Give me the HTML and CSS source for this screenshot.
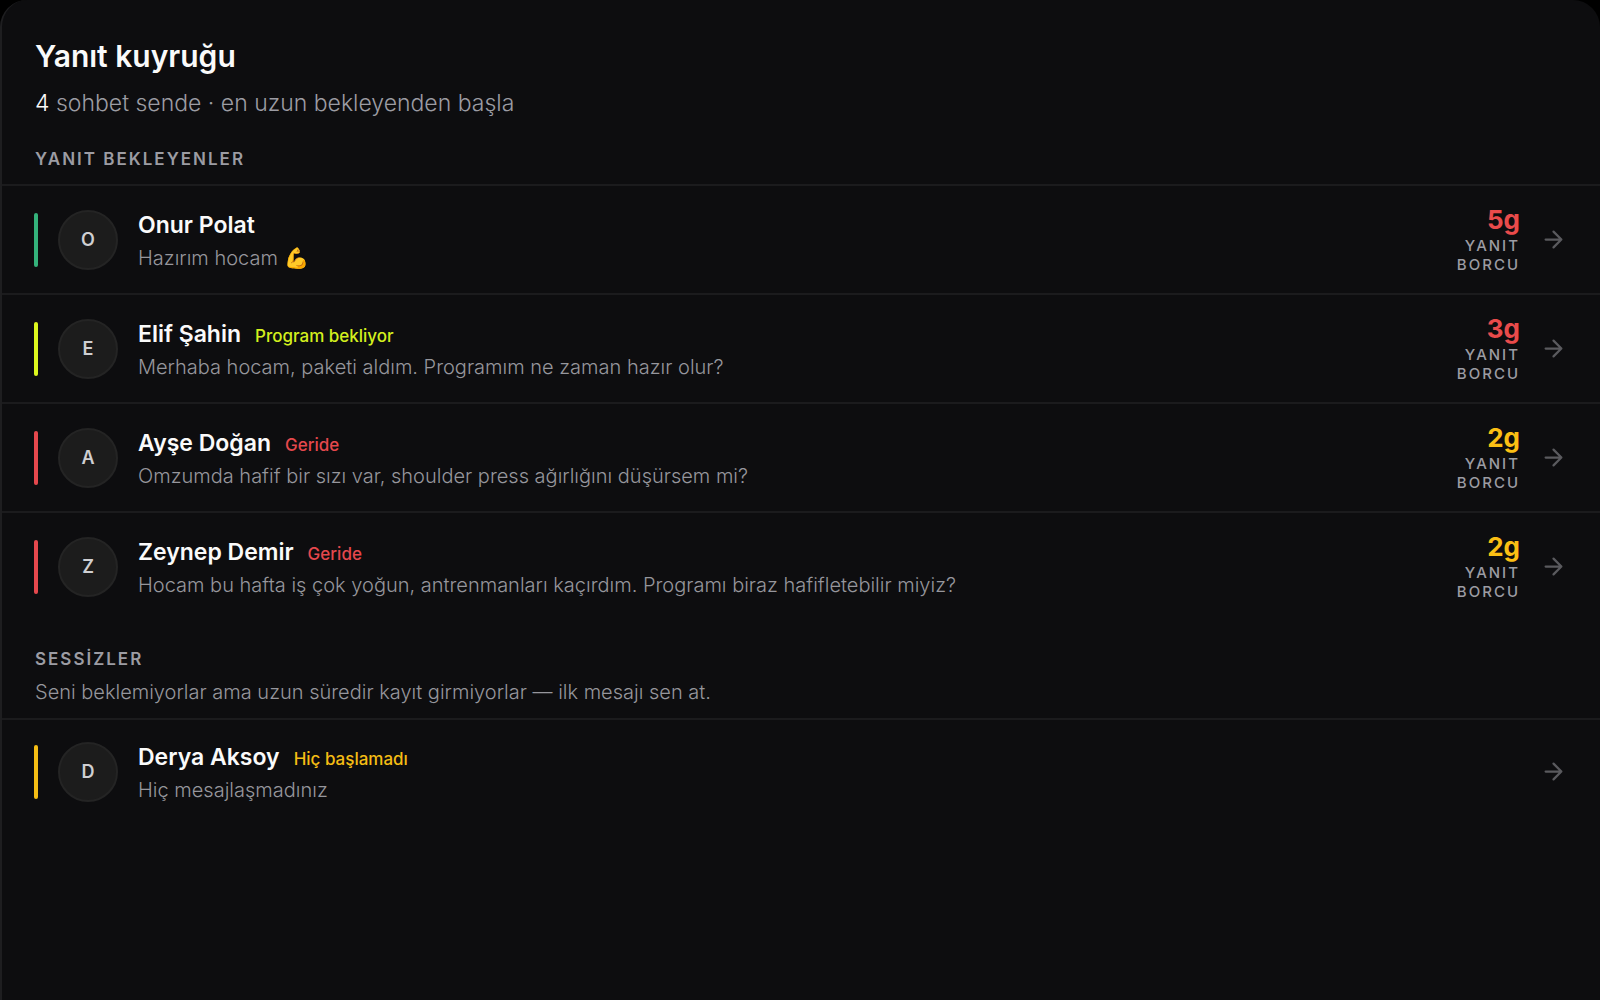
FILE: index.html
```html
<!DOCTYPE html>
<html lang="tr">
<head>
<meta charset="utf-8">
<meta name="viewport" content="width=device-width, initial-scale=1">
<title>Yanıt kuyruğu</title>
<link rel="stylesheet" href="styles.css">
</head>
<body>
<svg width="0" height="0" class="sprite" aria-hidden="true">
  <symbol id="arrow" viewBox="0 0 24 24"><path d="M5 12h14M12 5l7 7-7 7"/></symbol>
</svg>
<main class="panel">
  <header class="head">
    <h1 class="title">Yanıt kuyruğu</h1>
    <p class="subtitle"><span class="count">4</span> sohbet sende · en uzun bekleyenden başla</p>
  </header>

  <section>
    <h2 class="label">YANIT BEKLEYENLER</h2>
    <ul class="list">
      <li><a class="row" href="#onur">
        <span class="bar green"></span><span class="avatar">O</span>
        <span class="body"><span class="line"><span class="name">Onur Polat</span></span><span class="message">Hazırım hocam 💪</span></span>
        <span class="debt"><span class="days late">5g</span><span class="unit">YANIT BORCU</span></span>
        <svg class="arrow" aria-hidden="true"><use href="#arrow"/></svg>
      </a></li>
      <li><a class="row" href="#elif">
        <span class="bar lime"></span><span class="avatar">E</span>
        <span class="body"><span class="line"><span class="name">Elif Şahin</span><span class="tag tag-lime">Program bekliyor</span></span><span class="message">Merhaba hocam, paketi aldım. Programım ne zaman hazır olur?</span></span>
        <span class="debt"><span class="days late">3g</span><span class="unit">YANIT BORCU</span></span>
        <svg class="arrow" aria-hidden="true"><use href="#arrow"/></svg>
      </a></li>
      <li><a class="row" href="#ayse">
        <span class="bar red"></span><span class="avatar">A</span>
        <span class="body"><span class="line"><span class="name">Ayşe Doğan</span><span class="tag tag-red">Geride</span></span><span class="message">Omzumda hafif bir sızı var, shoulder press ağırlığını düşürsem mi?</span></span>
        <span class="debt"><span class="days soon">2g</span><span class="unit">YANIT BORCU</span></span>
        <svg class="arrow" aria-hidden="true"><use href="#arrow"/></svg>
      </a></li>
      <li><a class="row" href="#zeynep">
        <span class="bar red"></span><span class="avatar">Z</span>
        <span class="body"><span class="line"><span class="name">Zeynep Demir</span><span class="tag tag-red">Geride</span></span><span class="message">Hocam bu hafta iş çok yoğun, antrenmanları kaçırdım. Programı biraz hafifletebilir miyiz?</span></span>
        <span class="debt"><span class="days soon">2g</span><span class="unit">YANIT BORCU</span></span>
        <svg class="arrow" aria-hidden="true"><use href="#arrow"/></svg>
      </a></li>
    </ul>
  </section>

  <section class="quiet">
    <h2 class="label">SESSİZLER</h2>
    <p class="hint">Seni beklemiyorlar ama uzun süredir kayıt girmiyorlar — ilk mesajı sen at.</p>
    <ul class="list">
      <li><a class="row" href="#derya">
        <span class="bar amber"></span><span class="avatar">D</span>
        <span class="body"><span class="line"><span class="name">Derya Aksoy</span><span class="tag tag-amber">Hiç başlamadı</span></span><span class="message">Hiç mesajlaşmadınız</span></span>
        <svg class="arrow" aria-hidden="true"><use href="#arrow"/></svg>
      </a></li>
    </ul>
  </section>
</main>
</body>
</html>
```
FILE: styles.css
```css
* { box-sizing: border-box; }
body {
  margin: 0;
  background: #000;
  color: #fafafa;
  font-family: Inter, "Liberation Sans", sans-serif;
}
h1, h2, p, ul { margin: 0; padding: 0; }
ul { list-style: none; }
.sprite { position: absolute; }

.panel {
  min-height: 100vh;
  background: #0d0d0f;
  border-left: 2px solid #1e1e20;
  border-radius: 27px 27px 0 0;
}
.head { padding: 36px 33px 0; }
.title { font-size: 30px; line-height: 40px; font-weight: 600; }
.subtitle {
  margin-top: 9px;
  font-size: 23px;
  line-height: 36px;
  font-weight: 300;
  color: #9c9ca3;
}
.count { color: #fafafa; }
.label {
  padding: 26px 33px 0;
  font-size: 17px;
  line-height: 24px;
  font-weight: 600;
  letter-spacing: 2px;
  color: #9c9ca3;
}
.list { margin-top: 13px; }

.row {
  display: flex;
  align-items: center;
  gap: 20px;
  height: 109px;
  padding: 0 33px 0 32px;
  border-top: 2px solid #1b1b1d;
  color: inherit;
  text-decoration: none;
}
.bar { width: 4px; height: 54px; border-radius: 2px; }
.green { background: #34b27b; }
.lime { background: #dcf71e; }
.red { background: #e5484d; }
.amber { background: #f5bd14; }
.avatar {
  display: grid;
  place-items: center;
  width: 60px;
  height: 60px;
  border: 2px solid #242424;
  border-radius: 50%;
  background: #1c1c1c;
  color: #cfcfd2;
  font-size: 18px;
  font-weight: 600;
}
.body { flex: 1; min-width: 0; display: grid; gap: 2px; padding-top: 2px; }
.line { display: flex; align-items: baseline; gap: 14px; }
.name { font-size: 23px; line-height: 32px; font-weight: 600; }
.tag { font-size: 17px; line-height: 24px; font-weight: 500; }
.tag-lime { color: #d4f01e; }
.tag-red { color: #e5484d; }
.tag-amber { color: #f5bd14; }
.message, .hint {
  font-size: 20px;
  line-height: 30px;
  font-weight: 300;
  color: #96969c;
}
.debt { width: 72px; display: grid; gap: 3px; text-align: right; }
.days { font-size: 26px; line-height: 27px; font-weight: 700; }
.late { color: #e94b4b; }
.soon { color: #fbbf14; }
.unit {
  font-size: 15px;
  line-height: 19px;
  font-weight: 500;
  letter-spacing: 2px;
  color: #9c9ca3;
}
.arrow {
  width: 27px;
  height: 27px;
  fill: none;
  stroke: #5a5a5e;
  stroke-width: 2;
  stroke-linecap: round;
  stroke-linejoin: round;
}
.quiet .label { padding-top: 27px; }
.hint { margin-top: 6px; padding: 0 33px; }
.quiet .list { margin-top: 11px; }
.quiet .row { height: 105px; }
```
